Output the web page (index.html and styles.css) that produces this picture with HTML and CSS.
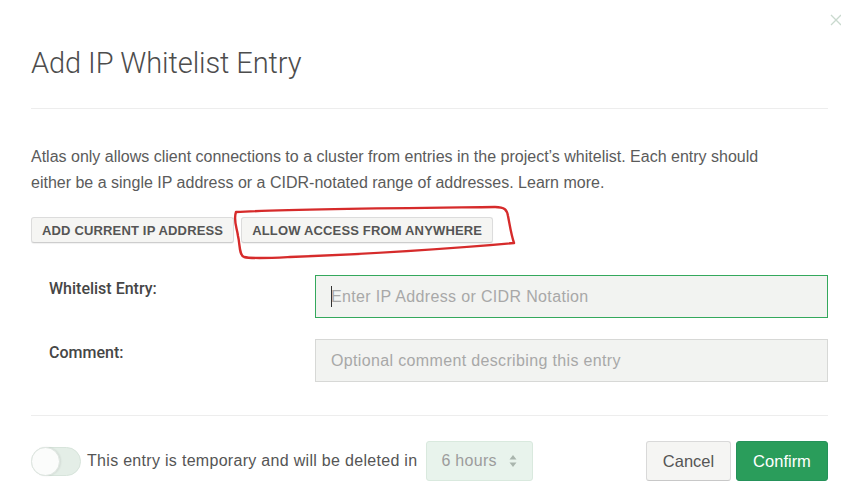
FILE: index.html
```html
<!DOCTYPE html>
<html lang="en">
<head>
<meta charset="utf-8">
<title>Add IP Whitelist Entry</title>
<link rel="stylesheet" href="styles.css">
</head>
<body>
<div class="modal">
  <button class="close" aria-label="Close">
    <svg width="12" height="12" viewBox="0 0 12 12"><path d="M1 1 L11 11 M11 1 L1 11" stroke="#c9d9ce" stroke-width="1.3" fill="none"/></svg>
  </button>
  <header class="modal-header">
    <h1 class="title">Add IP Whitelist Entry</h1>
  </header>
  <div class="modal-body">
    <p class="intro">Atlas only allows client connections to a cluster from entries in the project’s whitelist. Each entry should<br>either be a single IP address or a CIDR-notated range of addresses. Learn more.</p>
    <div class="quick-actions">
      <button class="btn-small">ADD CURRENT IP ADDRESS</button>
      <button class="btn-small">ALLOW ACCESS FROM ANYWHERE</button>
      <svg class="annotation" width="300" height="60" viewBox="0 0 300 60">
        <path d="M6 6 C 60 3, 180 2, 265 1 C 275 1, 277 4, 278 10 C 280 20, 281 28, 284 37 C 240 41, 160 47, 60 51 C 40 52, 22 53, 14 51 C 9 49, 10 38, 8 30 C 7 22, 3 14, 6 6 Z" fill="none" stroke="#d62b2b" stroke-width="2.4" stroke-linejoin="round"/>
      </svg>
    </div>
    <div class="form">
      <label class="label" for="entry">Whitelist Entry:</label>
      <div class="field field-focused">
        <input id="entry" class="input" type="text" placeholder="Enter IP Address or CIDR Notation">
        <span class="caret"></span>
      </div>
      <label class="label" for="comment">Comment:</label>
      <div class="field">
        <input id="comment" class="input" type="text" placeholder="Optional comment describing this entry">
      </div>
    </div>
  </div>
  <footer class="modal-footer">
    <div class="temp">
      <span class="toggle"><span class="knob"></span></span>
      <span class="temp-text">This entry is temporary and will be deleted in</span>
      <span class="select">6 hours
        <svg class="arrows" width="8" height="14" viewBox="0 0 8 14"><path d="M4 1 L7.5 5.5 H0.5 Z M4 13 L7.5 8.5 H0.5 Z" fill="#a9b5ad"/></svg>
      </span>
    </div>
    <div class="actions">
      <button class="btn btn-cancel">Cancel</button>
      <button class="btn btn-confirm">Confirm</button>
    </div>
  </footer>
</div>
</body>
</html>
```
FILE: styles.css
```css
html, body {
  margin: 0;
  padding: 0;
  background: #ffffff;
}
body {
  font-family: "Liberation Sans", Arial, sans-serif;
  color: #5a5a5a;
  width: 841px;
  height: 498px;
  overflow: hidden;
}
.modal {
  position: relative;
  padding: 0 13px 0 31px;
}
.close {
  position: absolute;
  top: 14px;
  right: -1px;
  padding: 0;
  border: 0;
  background: none;
  width: 12px;
  height: 12px;
  line-height: 0;
}
.modal-header {
  padding-top: 45px;
  padding-bottom: 27px;
  border-bottom: 1px solid #ededed;
}
.title {
  margin: 0;
  font-family: Roboto, "Liberation Sans", sans-serif;
  font-weight: 300;
  font-size: 29px;
  line-height: 36px;
  color: #4d4d4d;
  letter-spacing: -0.1px;
}
.modal-body {
  padding-bottom: 33px;
  border-bottom: 1px solid #ededed;
}
.intro {
  margin: 0;
  padding-top: 35px;
  font-size: 16px;
  line-height: 26px;
  color: #5b5b5b;
}
.quick-actions {
  position: relative;
  display: flex;
  gap: 7px;
  margin-top: 21px;
}
.btn-small {
  height: 26px;
  padding: 0 10px;
  font-family: "Liberation Sans", Arial, sans-serif;
  font-weight: bold;
  font-size: 13px;
  letter-spacing: 0.16px;
  color: #555;
  background: #f5f5f3;
  border: 1px solid #dcdcdc;
  border-bottom-color: #cdcdcd;
  border-radius: 3px;
  box-shadow: 0 1px 1px rgba(0,0,0,0.06);
}
.annotation {
  position: absolute;
  left: 199px;
  top: -11px;
  overflow: visible;
}
.form {
  display: grid;
  grid-template-columns: 284px 1fr;
  row-gap: 21px;
  margin-top: 32px;
}
.label {
  padding-left: 18px;
  padding-top: 4px;
  font-family: Roboto, "Liberation Sans", sans-serif;
  font-weight: 500;
  font-size: 16px;
  line-height: 20px;
  color: #464646;
}
.field {
  position: relative;
  box-sizing: border-box;
  height: 43px;
  border: 1px solid #d7d8d6;
  background: #f2f3f1;
}
.field.field-focused {
  border: 0;
  padding: 1px;
  box-shadow: inset 0 0 0 1px rgb(52, 168, 92);
}
.input {
  box-sizing: border-box;
  display: block;
  width: 100%;
  height: 41px;
  padding: 0 15px;
  margin: 0;
  font-family: "Liberation Sans", Arial, sans-serif;
  font-size: 16px;
  letter-spacing: 0.35px;
  background: transparent;
  border: 0;
  border-radius: 0;
  outline: none;
  color: #444;
}
.input::placeholder {
  color: #a8a8a8;
}
.caret {
  position: absolute;
  left: 16px;
  top: 11px;
  width: 1px;
  height: 21px;
  background: #333;
}
.modal-footer {
  display: flex;
  justify-content: space-between;
  align-items: center;
  padding-top: 25px;
}
.temp {
  display: flex;
  align-items: center;
}
.toggle {
  position: relative;
  box-sizing: border-box;
  width: 50px;
  height: 29px;
  border-radius: 15px;
  background: #e4eee7;
  border: 1px solid #d7e4db;
}
.knob {
  position: absolute;
  left: -1px;
  top: -1px;
  box-sizing: border-box;
  width: 29px;
  height: 29px;
  border-radius: 50%;
  background: #fbfcfb;
  border: 1px solid #dfe6e1;
  box-shadow: 1px 0 2px rgba(0,0,0,0.08);
}
.temp-text {
  margin-left: 6px;
  font-size: 16px;
  letter-spacing: 0.3px;
  color: #555;
}
.select {
  display: inline-flex;
  align-items: center;
  justify-content: space-between;
  box-sizing: border-box;
  width: 107px;
  height: 40px;
  margin-left: 9px;
  padding: 0 15px 0 14px;
  font-size: 16px;
  letter-spacing: 0.3px;
  color: #9c9c9c;
  background: #e8f3ec;
  border: 1px solid #d9e9de;
  border-radius: 3px;
}
.actions {
  display: flex;
  gap: 5px;
}
.btn {
  box-sizing: border-box;
  height: 40px;
  padding: 0 15px;
  font-family: "Liberation Sans", Arial, sans-serif;
  font-size: 16.5px;
  border-radius: 3px;
}
.btn-cancel {
  width: 85px;
  color: #555;
  background: #f5f5f3;
  border: 1px solid #d9d9d9;
  border-bottom-color: #c8c8c8;
}
.btn-confirm {
  width: 92px;
  color: #ffffff;
  background: #2a9d5b;
  border: 1px solid #25925a;
}
```
